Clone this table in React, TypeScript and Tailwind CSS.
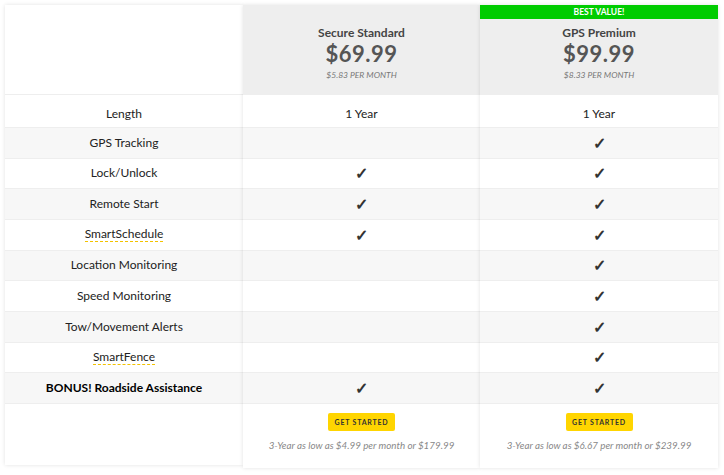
import React from 'react';

type Row = { label: string; std: string | boolean; prem: string | boolean; dashed?: boolean; bold?: boolean };

const rows: Row[] = [
  { label: 'GPS Tracking', std: false, prem: true },
  { label: 'Lock/Unlock', std: true, prem: true },
  { label: 'Remote Start', std: true, prem: true },
  { label: 'SmartSchedule', std: true, prem: true, dashed: true },
  { label: 'Location Monitoring', std: false, prem: true },
  { label: 'Speed Monitoring', std: false, prem: true },
  { label: 'Tow/Movement Alerts', std: false, prem: true },
  { label: 'SmartFence', std: false, prem: true, dashed: true },
  { label: 'BONUS! Roadside Assistance', std: true, prem: true, bold: true },
];

const Check = () => <span className="text-[16px] font-bold text-[#333]">✓</span>;

const Cell = ({ i, children }: { i: number; children?: React.ReactNode }) => (
  <div
    className={`h-[30.67px] flex items-center justify-center border-t border-[#eeeeee] ${
      i % 2 === 0 ? 'bg-[#f7f7f7]' : 'bg-white'
    }`}
  >
    {children}
  </div>
);

const Plan = ({
  name,
  price,
  monthly,
  key3,
  best,
  pick,
}: {
  name: string;
  price: string;
  monthly: string;
  key3: string;
  best?: boolean;
  pick: (r: Row) => string | boolean;
}) => (
  <div className="flex flex-col shadow-[0_0_4px_rgba(0,0,0,0.12)] bg-white">
    <div className="h-[89px] bg-[#eeeeee] flex flex-col items-center">
      {best ? (
        <div className="w-full h-[14px] bg-[#00cc00] text-white text-[8.5px] font-bold flex items-center justify-center">
          BEST VALUE!
        </div>
      ) : (
        <div className="h-[14px]" />
      )}
      <div className="mt-[6px] text-[12px] font-bold text-[#444] leading-[16px]">{name}</div>
      <div className="text-[22px] font-bold text-[#555] leading-[26px] tracking-[0.5px]">{price}</div>
      <div className="mt-[2px] text-[8.5px] italic text-[#777] leading-[12px]">{monthly}</div>
    </div>
    <div className="h-[33px] pt-[6px] flex items-center justify-center bg-white text-[12px] text-[#222] border-t border-[#eeeeee]">
      1 Year
    </div>
    {rows.map((r, i) => (
      <Cell key={r.label} i={i}>
        {pick(r) === true ? <Check /> : null}
      </Cell>
    ))}
    <div className="h-[65px] flex flex-col items-center border-t border-[#eeeeee]">
      <button className="mt-[9px] w-[67px] h-[18px] bg-[#ffd500] rounded-[2px] text-[7px] font-bold tracking-[0.8px] text-[#333]">
        GET STARTED
      </button>
      <div className="mt-[7px] text-[9.8px] italic text-[#888]">{key3}</div>
    </div>
  </div>
);

export default function App() {
  return (
    <div
      className="w-[724px] h-[475px] bg-white pl-[5px] pt-[5px]"
      style={{ fontFamily: 'Lato, "Open Sans", sans-serif' }}
    >
      <div className="flex items-start">
        <div className="w-[238px] flex flex-col bg-white shadow-[0_0_4px_rgba(0,0,0,0.12)]">
          <div className="h-[89px]" />
          <div className="h-[33px] pt-[6px] flex items-center justify-center text-[12px] text-[#222] border-t border-[#eeeeee]">
            Length
          </div>
          {rows.map((r, i) => (
            <Cell key={r.label} i={i}>
              <span
                className={`text-[12px] ${r.bold ? 'font-bold text-black' : 'text-[#222]'} ${
                  r.dashed ? 'border-b border-dashed border-[#f2c200] leading-[14px]' : ''
                }`}
              >
                {r.label}
              </span>
            </Cell>
          ))}
          <div className="h-[62px] border-t border-[#eeeeee]" />
        </div>
        <div className="w-[237px]">
          <Plan
            name="Secure Standard"
            price="$69.99"
            monthly="$5.83 PER MONTH"
            key3="3-Year as low as $4.99 per month or $179.99"
            pick={(r) => r.std}
          />
        </div>
        <div className="w-[238px]">
          <Plan
            name="GPS Premium"
            price="$99.99"
            monthly="$8.33 PER MONTH"
            key3="3-Year as low as $6.67 per month or $239.99"
            best
            pick={(r) => r.prem}
          />
        </div>
      </div>
    </div>
  );
}
